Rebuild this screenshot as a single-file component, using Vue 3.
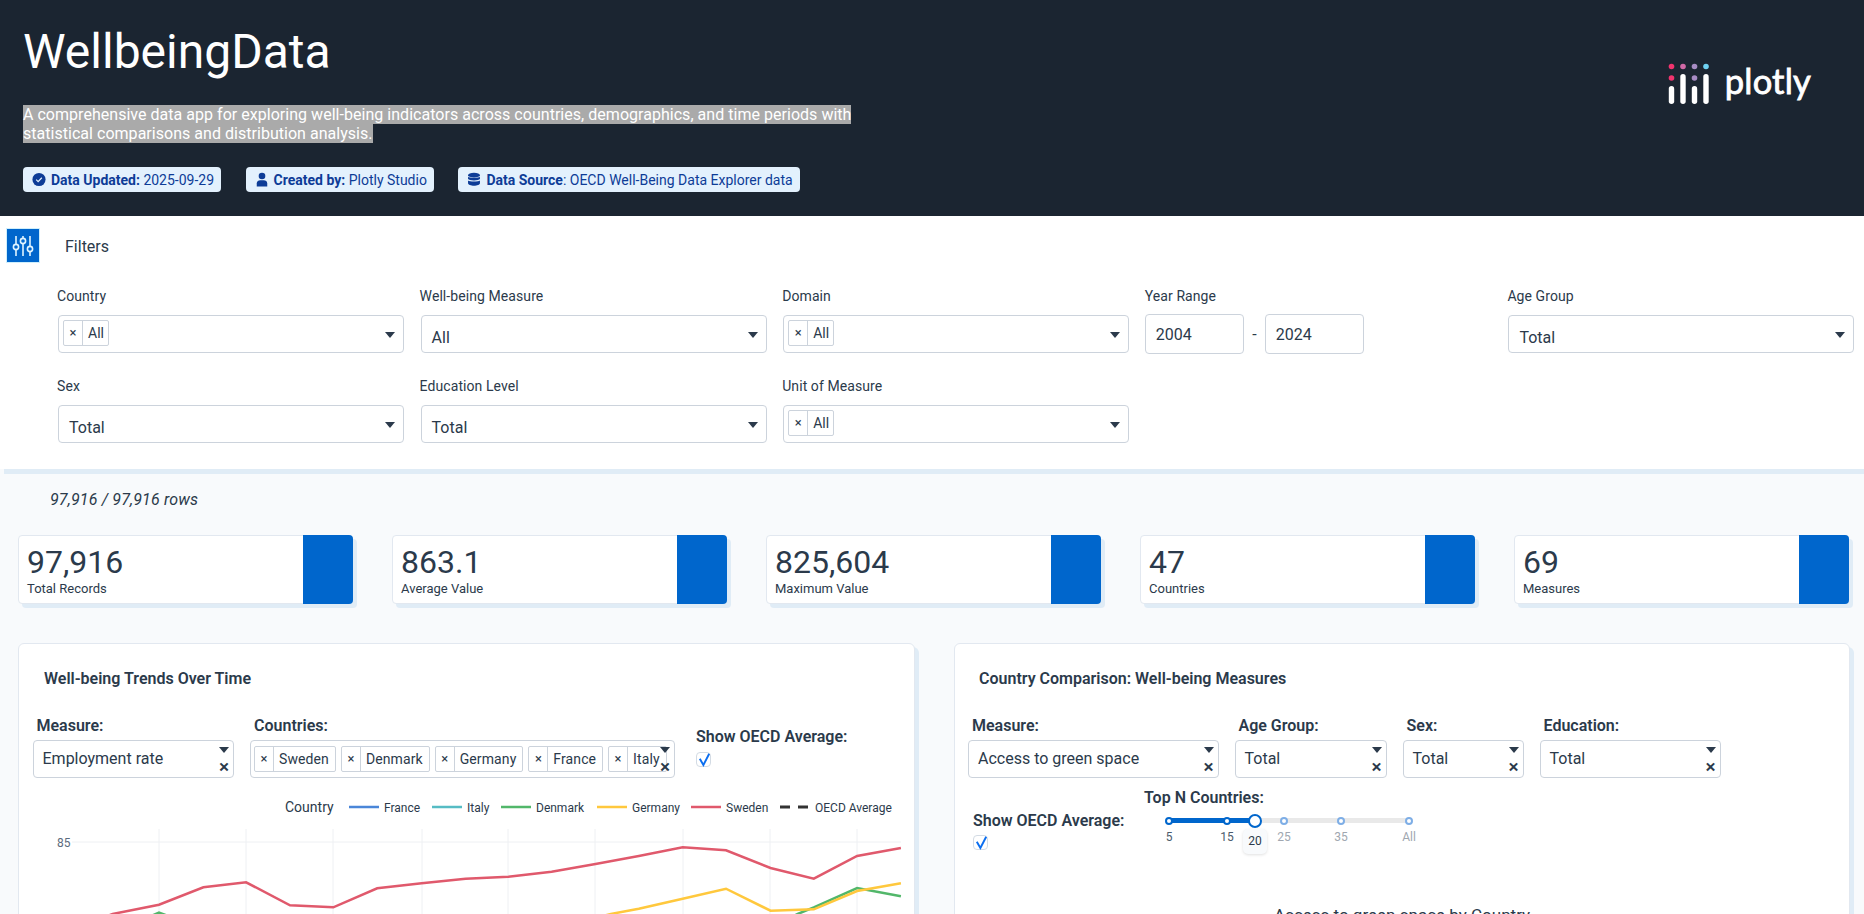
<script setup>
const pills = [
  { icon: 'check', bold: 'Data Updated:', rest: ' 2025-09-29' },
  { icon: 'user', bold: 'Created by:', rest: ' Plotly Studio' },
  { icon: 'db', bold: 'Data Source', rest: ': OECD Well-Being Data Explorer data' }
]
const kpis = [
  ['97,916', 'Total Records'], ['863.1', 'Average Value'], ['825,604', 'Maximum Value'],
  ['47', 'Countries'], ['69', 'Measures']
]
const gridX = [159, 246, 333, 422, 508, 595, 683, 770, 857]
const pts = (a) => a.map(([x, y]) => `${(x / 1.686).toFixed(1)},${(620 + y / 3).toFixed(1)}`).join(' ')
const sweden = pts([[170,895],[190,882],[268,854],[343,802],[415,787],[489,856],[562,862],[636,805],[711,790],[785,776],[857,770],[930,755],[1004,732],[1077,708],[1151,682],[1224,691],[1299,744],[1372,776],[1445,708],[1519,684]])
const germany = pts([[1000,895],[1030,882],[1077,866],[1151,836],[1224,806],[1299,872],[1372,868],[1445,813],[1519,790]])
const denmark = pts([[1330,895],[1345,882],[1372,862],[1445,804],[1519,829]])
const denmark2 = pts([[245,895],[268,878],[295,895]])
const legend = [
  ['France', 349, '#4a86d8', ''], ['Italy', 432, '#56bcc4', ''], ['Denmark', 501, '#52b76a', ''],
  ['Germany', 597, '#ffc83d', ''], ['Sweden', 691, '#e0596c', ''], ['OECD Average', 780, '#333', '10 8']
]
const marks = [['5', 1169], ['15', 1227], ['25', 1284], ['35', 1341], ['All', 1409]]
const chips = ['Sweden', 'Denmark', 'Germany', 'France', 'Italy']
</script>

<template>
  <div class="page">
    <header class="hero">
      <div class="hero-left">
        <h1>WellbeingData</h1>
        <p class="sub"><span>A comprehensive data app for exploring well-being indicators across countries, demographics, and time periods with statistical comparisons and distribution analysis.</span></p>
        <div class="pills">
          <div v-for="p in pills" :key="p.bold" class="pill">
            <svg v-if="p.icon === 'check'" class="pi" viewBox="0 0 16 16"><circle cx="8" cy="8" r="7.5" fill="#0d3c97"/><path d="M4.8 8.2l2.2 2.2 4.2-4.4" fill="none" stroke="#e3f1fd" stroke-width="1.4"/></svg>
            <svg v-else-if="p.icon === 'user'" class="pi" viewBox="0 0 16 16"><circle cx="8" cy="4" r="3.8" fill="#0d3c97"/><path d="M2 16v-3.5C2 10 4 8.8 6 8.8h4c2 0 4 1.2 4 3.7V16z" fill="#0d3c97"/></svg>
            <svg v-else class="pi" viewBox="0 0 16 16"><ellipse cx="8" cy="3" rx="6.8" ry="2.8" fill="#0d3c97"/><path d="M1.2 4.8c1.2 1.5 12.4 1.5 13.6 0V7.5c-1.2 2-12.4 2-13.6 0zM1.2 9c1.2 1.6 12.4 1.6 13.6 0v3.4c0 3.7-13.6 3.7-13.6 0z" fill="#0d3c97"/></svg>
            <span><b>{{ p.bold }}</b>{{ p.rest }}</span>
          </div>
        </div>
      </div>
      <div class="logo">
        <svg width="44" height="42" viewBox="0 0 44 42">
          <circle cx="3.500" cy="3.500" r="2.800" fill="#f0346e"/><circle cx="15" cy="3.500" r="2.800" fill="#d069a6"/><circle cx="26.500" cy="3.500" r="2.800" fill="#a78cc4"/><circle cx="38" cy="3.500" r="2.800" fill="#6fd2f2"/>
          <circle cx="3.500" cy="15" r="2.800" fill="#f0346e"/><circle cx="26.500" cy="15" r="2.800" fill="#a78cc4"/>
          <g fill="#fff"><rect x="0.800" y="23" width="5.400" height="18" rx="2.700"/><rect x="12.300" y="11" width="5.400" height="30" rx="2.700"/><rect x="23.800" y="23" width="5.400" height="18" rx="2.700"/><rect x="35.300" y="11" width="5.400" height="30" rx="2.700"/></g>
        </svg>
        <span>plotly</span>
      </div>
    </header>

    <section class="filters">
      <div class="fhead">
        <div class="fbtn">
          <svg width="22" height="22" viewBox="0 0 22 22" fill="none" stroke="#dff4ff" stroke-width="1.600"><path d="M4 1v8M4 15v6M11 1v2M11 9v12M18 1v10M18 17v4"/><circle cx="4" cy="12" r="2.600"/><circle cx="11" cy="6" r="2.600"/><circle cx="18" cy="14" r="2.600"/></svg>
        </div>
        <span class="ftitle">Filters</span>
      </div>
      <div class="fgrid">
        <div class="field"><label>Country</label><div class="dd"><span class="chip"><i>×</i><em>All</em></span><u class="caret"></u></div></div>
        <div class="field"><label>Well-being Measure</label><div class="dd"><span class="val">All</span><u class="caret"></u></div></div>
        <div class="field"><label>Domain</label><div class="dd"><span class="chip"><i>×</i><em>All</em></span><u class="caret"></u></div></div>
        <div class="field"><label>Year Range</label><div class="years"><div class="yr">2004</div><span>-</span><div class="yr">2024</div></div></div>
        <div class="field"><label>Age Group</label><div class="dd"><span class="val">Total</span><u class="caret"></u></div></div>
        <div class="field"><label>Sex</label><div class="dd"><span class="val">Total</span><u class="caret"></u></div></div>
        <div class="field"><label>Education Level</label><div class="dd"><span class="val">Total</span><u class="caret"></u></div></div>
        <div class="field"><label>Unit of Measure</label><div class="dd"><span class="chip"><i>×</i><em>All</em></span><u class="caret"></u></div></div>
      </div>
    </section>

    <p class="rows">97,916 / 97,916 rows</p>

    <div class="kpis">
      <div v-for="k in kpis" :key="k[1]" class="kpi">
        <div class="ktext"><strong>{{ k[0] }}</strong><small>{{ k[1] }}</small></div>
        <div class="kband"></div>
      </div>
    </div>

    <div class="cards">
      <section class="card left">
        <h2>Well-being Trends Over Time</h2>
        <div class="ctrls">
          <div class="ctrl w201"><label>Measure:</label><div class="sm"><span>Employment rate</span><u class="caret"></u><b class="x">×</b></div></div>
          <div class="ctrl w425"><label>Countries:</label>
            <div class="sm multi">
              <span v-for="c in chips" :key="c" class="chip"><i>×</i><em>{{ c }}</em></span>
              <u class="caret"></u><b class="x">×</b>
            </div>
          </div>
          <div class="ctrl oecd"><label>Show OECD Average:</label><div class="cb"><svg width="15" height="15" viewBox="0 0 15 15"><path d="M3.800 6.800l3.600 6.200L13.200 1.800" fill="none" stroke="#0b6ef0" stroke-width="1.900"/></svg></div></div>
        </div>
        <svg class="chart" width="895" height="124" viewBox="0 0 895 124">
          <g transform="translate(-19,-790)">
            <text x="285" y="812" class="lt">Country</text>
            <g v-for="l in legend" :key="l[0]">
              <line :x1="l[1]" :x2="l[1] + 30" y1="807" y2="807" :stroke="l[2]" :stroke-width="l[3] ? 3 : 2.5" :stroke-dasharray="l[3]"/>
              <text :x="l[1] + 35" y="812" class="ll">{{ l[0] }}</text>
            </g>
            <line v-for="x in gridX" :key="x" :x1="x" :x2="x" y1="829" y2="914" stroke="#eef0f3"/>
            <line x1="72" x2="901" y1="842" y2="842" stroke="#eef0f3"/>
            <text x="57" y="847" class="tick">85</text>
            <polyline :points="denmark2" fill="none" stroke="#52b76a" stroke-width="2.500"/>
            <polyline :points="denmark" fill="none" stroke="#52b76a" stroke-width="2.500"/>
            <polyline :points="germany" fill="none" stroke="#ffc83d" stroke-width="2.500"/>
            <polyline :points="sweden" fill="none" stroke="#e0596c" stroke-width="2.500"/>
          </g>
        </svg>
      </section>

      <section class="card right">
        <h2>Country Comparison: Well-being Measures</h2>
        <div class="ctrls">
          <div class="ctrl w251"><label>Measure:</label><div class="sm"><span>Access to green space</span><u class="caret"></u><b class="x">×</b></div></div>
          <div class="ctrl w152"><label>Age Group:</label><div class="sm"><span>Total</span><u class="caret"></u><b class="x">×</b></div></div>
          <div class="ctrl w121"><label>Sex:</label><div class="sm"><span>Total</span><u class="caret"></u><b class="x">×</b></div></div>
          <div class="ctrl w181"><label>Education:</label><div class="sm"><span>Total</span><u class="caret"></u><b class="x">×</b></div></div>
        </div>
        <div class="row2">
          <div class="ctrl oecd2"><label>Show OECD Average:</label><div class="cb"><svg width="15" height="15" viewBox="0 0 15 15"><path d="M3.800 6.800l3.600 6.200L13.200 1.800" fill="none" stroke="#0b6ef0" stroke-width="1.900"/></svg></div></div>
          <div class="topn">
            <label>Top N Countries:</label>
            <div class="slider">
              <div class="track"></div>
              <div class="fill"></div>
              <span v-for="m in marks" :key="m[0]" class="dot" :class="{ on: m[1] < 1255 }" :style="{ left: m[1] - 1169 + 'px' }"></span>
              <span v-for="m in marks" :key="m[0] + 't'" class="mark" :class="{ on: m[1] < 1255 }" :style="{ left: m[1] - 1169 + 'px' }">{{ m[0] }}</span>
              <span class="handle"></span>
              <span class="tip">20</span>
            </div>
          </div>
        </div>
        <p class="ptitle">Access to green space by Country</p>
      </section>
    </div>
  </div>
</template>

<style>
html, body { overflow: hidden; }
</style>

<style scoped>
.page { height: 914px; overflow: hidden; background: #f8fafc; font-family: Roboto, sans-serif; color: #2b3a4b; }
.hero { height: 216px; box-sizing: border-box; background: #1b2531; padding: 23px 53px 0 23px; display: flex; justify-content: space-between; }
h1 { margin: 0; font-size: 48px; line-height: 58px; font-weight: 400; color: #fff; }
.sub { margin: 24px 0 0; width: 840px; font-size: 16px; line-height: 19px; color: #fff; letter-spacing: .03px; }
.sub span { background: #aaaaaa; }
.pills { display: flex; gap: 24.500px; margin-top: 24px; }
.pill { height: 25px; display: flex; align-items: center; gap: 5px; padding: 0 7px 0 9px; background: #e3f1fd; border-radius: 4px; font-size: 14px; color: #0d3c97; }
.pill b { font-weight: 700; }
.pi { width: 14px; height: 15px; }
.logo { display: flex; align-items: flex-start; margin-top: 40px; color: #fff; }
.logo svg { margin-right: 13px; }
.logo span { font-family: Lato, sans-serif; font-size: 34.500px; line-height: 36px; font-weight: 400; margin-top: 0; letter-spacing: .2px; -webkit-text-stroke: .8px #fff; }

.filters { background: #fff; box-shadow: 4px 5px 0 #e0ecf6; height: 253px; padding-top: 12px; box-sizing: border-box; }
.fhead { display: flex; align-items: center; gap: 25px; padding-left: 6px; font-size: 16px; }
.ftitle { margin-top: 2px; }
.fbtn { width: 34px; height: 35px; box-sizing: border-box; border: 1px solid #cfeffc; background: #0066cc; display: flex; align-items: center; justify-content: center; }
.fgrid { display: grid; grid-template-columns: repeat(5, 346.6px); column-gap: 16px; row-gap: 23px; margin: 23px 0 0 57px; }
.field label { display: block; font-size: 14px; line-height: 20px; margin-bottom: 9px; letter-spacing: .08px; }
.dd { position: relative; height: 38px; box-sizing: border-box; margin-left: 1px; width: 346px; border: 1px solid #ccd3dc; border-radius: 4px; background: #fff; }
.val { position: absolute; left: 10px; top: 12px; font-size: 16px; line-height: 20px; }
.caret { position: absolute; right: 8px; top: 16px; width: 0; height: 0; border-left: 5px solid transparent; border-right: 5px solid transparent; border-top: 6px solid #2b3a4b; }
.chip { display: inline-flex; height: 26px; box-sizing: border-box; border: 1px solid #ccd3dc; border-radius: 2px; font-size: 14px; line-height: 24px; margin: 4px 0 0 4px; }
.chip i { font-style: normal; font-size: 13px; width: 19px; text-align: center; border-right: 1px solid #ccd3dc; box-sizing: border-box; }
.chip em { font-style: normal; padding: 0 4px 0 5px; }
.years { display: flex; align-items: center; height: 38px; gap: 8px; }
.yr { width: 99.500px; height: 40px; box-sizing: border-box; border: 1px solid #ccd3dc; border-radius: 4px; font-size: 16px; line-height: 40px; padding-left: 10px; flex: none; }

.rows { margin: 21px 0 0 50px; font-size: 16px; line-height: 20px; font-style: italic; letter-spacing: .15px; }
.kpis { display: grid; grid-template-columns: repeat(5, 1fr); column-gap: 39px; margin: 25px 15px 0 18px; }
.kpi { height: 69px; box-sizing: border-box; display: flex; background: #fff; border: 1px solid #e2e8f0; border-radius: 4px; box-shadow: 4px 4px 0 #e0ecf6; }
.ktext { flex: 1; padding-left: 8px; display: flex; flex-direction: column; }
.ktext strong { font-weight: 400; font-size: 32px; line-height: 38px; margin-top: 7px; }
.ktext small { font-size: 13px; line-height: 16px; }
.kband { background: #0066cc; width: 50px; margin: -1px -1px -1px 0; border-radius: 0 4px 4px 0; }
.cards { display: grid; grid-template-columns: 897px 896px; column-gap: 39px; margin: 39px 0 0 18px; }
.card { height: 400px; box-sizing: border-box; background: #fff; border: 1px solid #e2e8f0; border-radius: 6px; box-shadow: 4px 4px 0 #e0ecf6; padding-top: 25px; }
h2 { margin: 0; font-size: 16px; line-height: 20px; font-weight: 600; }
.left h2 { margin-left: 25px; }
.right h2 { margin-left: 24px; }
.ctrls { display: flex; gap: 16px; margin-top: 27px; }
.left .ctrls { padding-left: 13.500px; }
.right .ctrls { padding-left: 13px; }
.ctrl label, .topn label { display: block; font-size: 16px; line-height: 20px; font-weight: 600; margin: 0 0 4px 4px; }
.w201 { width: 201.500px; } .w425 { width: 425px; } .w251 { width: 250.500px; } .w152 { width: 152px; } .w121 { width: 121px; } .w181 { width: 181px; }
.sm { position: relative; height: 38px; box-sizing: border-box; border: 1px solid #ccd3dc; border-radius: 4px; background: #fff; font-size: 16px; line-height: 36px; padding-left: 9px; }
.sm .caret { right: 4px; top: 6px; }
.x { position: absolute; right: 4px; top: 16px; font-size: 19px; line-height: 20px; font-weight: 500; width: 10px; text-align: center; }
.multi { padding-left: 0; display: flex; gap: 0; }
.multi .chip { margin: 5px 0 0 5px; }
.multi .chip:first-child { margin-left: 3px; }
.multi em { padding: 0 6px 0 5px; letter-spacing: .1px; }
.oecd { margin: 11px 0 0 5px; }
.oecd label { margin: 0 0 5px 0; }
.cb { width: 15px; height: 15px; border: 1px solid #d3dbe4; border-radius: 4px; box-sizing: border-box; }
.cb svg { display: block; margin: -1px 0 0 -1px; }
.chart { display: block; margin-top: 12px; }
.ll { font-family: Roboto, sans-serif; font-size: 12px; fill: #2b3a4b; }
.lt { font-family: Roboto, sans-serif; font-size: 14px; fill: #2b3a4b; }
.tick { font-family: Roboto, sans-serif; font-size: 12px; fill: #5b6b7d; }
.row2 { display: flex; padding-left: 14px; margin-top: 10px; }
.oecd2 { width: 175px; margin-top: 23px; }
.oecd2 label { margin: 0 0 4px 4px; }
.oecd2 .cb { margin-left: 4px; }
.topn { width: 280px; }
.topn label { margin: 0; }
.slider { position: relative; margin: 10px 0 0 25px; width: 240px; height: 50px; }
.track { position: absolute; left: 0; right: 0; top: 0; height: 5px; background: #e9e9e9; border-radius: 2px; }
.fill { position: absolute; left: 0; width: 86px; top: 0; height: 5px; background: #0066cc; }
.dot { position: absolute; top: -1.500px; width: 8px; height: 8px; margin-left: -4px; border: 2px solid #7eaee6; box-sizing: border-box; border-radius: 50%; background: #fff; }
.dot.on { border-color: #0066cc; }
.mark { position: absolute; top: 12px; transform: translateX(-50%); font-size: 12px; line-height: 14px; color: #a0a7b0; }
.mark.on { color: #4b5b6c; }
.handle { position: absolute; left: 86px; top: -4.500px; width: 14px; height: 14px; margin-left: -7px; box-sizing: border-box; border: 2.500px solid #0066cc; border-radius: 50%; background: #fff; }
.tip { position: absolute; left: 74px; top: 11px; width: 24px; height: 25px; border-radius: 5px; background: #f8fafc; box-shadow: 0 1px 3px rgba(0,0,0,.12); text-align: center; font-size: 12px; line-height: 25px; }
.ptitle { margin: 37px 0 0; font-size: 17px; line-height: 20px; text-align: center; }
</style>
